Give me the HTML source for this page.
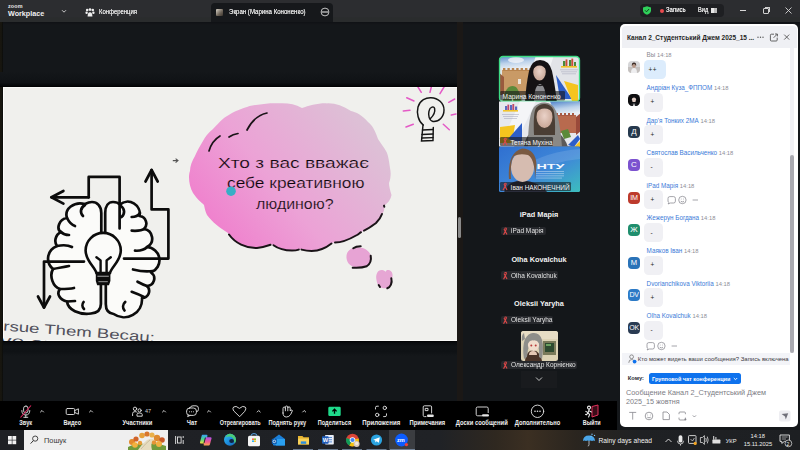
<!DOCTYPE html>
<html><head><meta charset="utf-8">
<style>
*{margin:0;padding:0;box-sizing:border-box}
html,body{width:800px;height:450px;overflow:hidden;background:#141619;font-family:"Liberation Sans",sans-serif}
.a{position:absolute}
.t{position:absolute;white-space:nowrap;line-height:1}
#top{left:0;top:0;width:800px;height:22px;background:linear-gradient(180deg,#2c2d30 0,#2c2d30 78%,#2a2c2d 80%,#2a2c2d 100%)}
#main{left:0;top:22px;width:800px;height:408px;background:#14171a}
#slide{left:3px;top:87px;width:454px;height:254px;background:#f0f0ed;overflow:hidden}
#strip{left:457px;top:22px;width:6px;height:379px;background:#1b1816}
#lstrip{left:0;top:22px;width:3px;height:379px;background:linear-gradient(90deg,#19160f 0,#15150f 60%,#0a0a0a 100%)}
#tb{left:0;top:401px;width:617px;height:29px;background:#000}
#task{left:0;top:430px;width:800px;height:20px;background:linear-gradient(90deg,#1e2024 0%,#202226 55%,#2f2820 62%,#3b2f22 66%,#2a251f 72%,#1f2124 80%,#1d1f22 100%)}
#chat{left:620px;top:24px;width:178px;height:403px;background:#fff;border-radius:5px;overflow:hidden}
.lb{top:420.5px;font-size:5.8px;font-weight:700;color:#ececec;transform:translateX(-50%)}
.nm{left:646.6px;font-size:6.3px}.tm{color:#8e8e96;font-size:5.8px}.av{left:628px;width:12px;height:12px;border-radius:4px;overflow:hidden}.avl{position:absolute;left:0;top:0;width:12px;height:12px;line-height:12px;text-align:center;color:#fff}.bub{left:643.6px;width:19.4px;height:19px;border-radius:4.5px;background:#f0f0f4}.bt{font-size:6.4px;color:#1f1f24}
.pn{left:539px;transform:translateX(-50%);font-size:7.3px;font-weight:700;color:#f2f2f2}.chip{left:500.5px;height:8.5px;background:#26282c;border-radius:2px}.ct{left:511px;font-size:6.8px;color:#e2e2e2;transform:scaleX(0.96);transform-origin:0 0}
</style></head><body>
<div id="top" class="a"></div>
<div id="main" class="a"></div>
<div class="a" style="left:0;top:22px;width:800px;height:3px;background:linear-gradient(180deg,#0f1115,#15171a)"></div>
<div id="lstrip" class="a"></div>
<div id="strip" class="a"></div>
<div class="a" style="left:0;top:72px;width:457px;height:15px;background:linear-gradient(180deg,#14171a 0%,#0f1215 70%,#050709 92%,#000 100%)"></div>
<div class="a" style="left:3px;top:341px;width:454px;height:15px;background:linear-gradient(180deg,#000 0,#080a0d 8%,#101316 35%,#0f1215 70%,#14171a 100%)"></div>
<div id="slide" class="a"></div>
<div class="a" style="left:3px;top:87px;width:454px;height:254px;border-left:1.5px solid #fcfcfb;border-top:1px solid #fafaf8;border-bottom:1px solid #fafaf8;z-index:0"></div>
<div class="a" style="left:458px;top:217px;width:3px;height:21px;background:#8a8a8a;border-radius:1.5px"></div>
<!-- SLIDE -->
<svg class="a" style="left:0;top:0" width="460" height="345" viewBox="0 0 460 345">
<defs>
<clipPath id="sc"><rect x="3" y="87" width="454" height="254"/></clipPath>
<linearGradient id="pk" x1="0" y1="0.75" x2="1" y2="0.15"><stop offset="0" stop-color="#f07ccc"/><stop offset="0.4" stop-color="#eca2d6"/><stop offset="1" stop-color="#dac6d6"/></linearGradient>
<linearGradient id="pku" gradientUnits="userSpaceOnUse" x1="188" y1="206.7" x2="392" y2="131.2"><stop offset="0" stop-color="#f07ccc"/><stop offset="0.4" stop-color="#eca2d6"/><stop offset="1" stop-color="#dac6d6"/></linearGradient>
<filter id="bl" x="-10%" y="-10%" width="120%" height="120%"><feGaussianBlur stdDeviation="0.6"/></filter>
</defs>
<g clip-path="url(#sc)">
<!-- rotated text card -->
<g transform="rotate(4.4 8 330)">
<text x="3" y="330.8" font-size="13.5" font-family="Liberation Sans" fill="#50505c" textLength="152" lengthAdjust="spacingAndGlyphs">rsue Them Becau:</text>
<text x="1" y="345" font-size="13.5" font-family="Liberation Sans" fill="#50505c" textLength="56" lengthAdjust="spacingAndGlyphs">ve on</text>
</g>
<!-- cloud -->
<g filter="url(#bl)">
<path fill="url(#pk)" d="M190 171 C188 176 189 186 193 193 C197 199 201 202 204 205 C205 210 206 213 207 215 C212 222 220 228 228 233 C234 243 246 248.5 257 248 C263 247.5 268 246 272 244.3 C277 248.5 286 250.5 292 250.5 C296 250.5 298 250 300 249.1 C306 251 316 251.5 322 249 C326 247.5 330 245 333 242.6 C340 243 350 239 357 235 C359 233.5 361 232.5 362.4 231.3 C368 229 372 226 376 223 C379 220 381 217 382 214 C384 212 385 208 384 206 C388 203 391 199 391.5 195 C390 190 389 186 389 183 C391 178 391 172 390 168 C389 160 388 155 386.6 152 C383 146 380 142 378 139 C375 130 372 125 368 122 C362 115 356 112 351 111 C343 106 335 103 327 103.4 C318 103 309 106 302 108 C295 104 288 103 280 103.3 C272 103 268 103 264 104 C258 105 252 105 247 107 C242 108 240 110 236 111 C230 114 227 116 224 118 C219 122 216 126 213 129 C208 133 205 137 203 141 C200 146 197 151 195 156 C192 161 190 166 190 171Z"/>
<path fill="#e7a3d4" d="M346.5 258 C346 251 351 247.5 357 247.5 C364 247 369 250 371 256 C372.5 263 368 267.5 360 267.8 C352 268 347 264 346.5 258Z"/>
<path fill="#e6a6d4" d="M376.5 280 C375.5 275 377 270 382 270 C384 270 385 271 385.5 272 C386 270 388 269.5 390 270.5 C393 272 393 276 392 279 C392.5 284 390 288 385 288.3 C380 288.3 377 285 376.5 280Z"/>
</g>
<g fill="none" stroke="#1a1418" stroke-width="2" stroke-linecap="round">
<path d="M209 151 C211 144 215 139 220 136" stroke-width="1.7"/>
<path d="M229 137 C232 135 235 134 238 133.5" stroke-width="1.7"/>
<path d="M247 130 C252 120 258 115 267 113" stroke-width="1.7"/>
<path d="M229 234.5 C235 243 246 248.5 257 248 C263 247.5 267 246 270.5 244.8"/><path d="M273.5 245.2 C278 248.5 286 250.5 292 250.5 C295 250.5 297 250.2 298.8 249.6"/><path d="M301.5 249.6 C307 251 316 251.5 322 249 C326 247.5 329 245.5 331.5 243.5"/>
<path d="M335 242.6 C341 242.6 350 239 357 235 C358.5 234 359.8 233 361 232.2"/><path d="M364 230.6 C369 228.5 372 226 376 223 C379 220 381 217 382 214"/>
<path d="M384 205.6 L384.3 206.8"/>
<path d="M353.3 248.3 C355 247 358 246.3 360.7 246.3"/>
<path d="M370.7 255.7 C371.5 260 370 264 366.7 266.3 C362 268 357 268 352.7 267.7"/>
<path d="M391.3 278.3 C392.5 283 390.5 287 387.3 288.3"/>
<path d="M380 287 L378.7 285"/>
</g>
<g font-family="Liberation Sans" fill="#0c060c" stroke="url(#pku)" stroke-width="0.2" style="font-weight:400">
<text x="218" y="168" font-size="14" textLength="151" lengthAdjust="spacingAndGlyphs">Хто з вас вважає</text>
<text x="227" y="188.3" font-size="14" textLength="137.5" lengthAdjust="spacingAndGlyphs">себе креативною</text>
<text x="256" y="209.2" font-size="14" textLength="77.5" lengthAdjust="spacingAndGlyphs">людиною?</text>
</g>
<circle cx="231" cy="191.2" r="4.8" fill="#38aec6"/>
<!-- small arrow -->
<path d="M172.8 160.6 H177.6 M175.6 158.6 L178 160.6 L175.6 162.6" fill="none" stroke="#555" stroke-width="1.1"/>
<!-- lightbulb sketch -->
<g fill="none" stroke="#e45ac6" stroke-width="1.5" stroke-linecap="round">
<path d="M418 87 L421.3 92.3"/><path d="M431.3 87 L430 92.3"/><path d="M444 87 L440 93.7"/><path d="M406.7 97.7 L414 101"/><path d="M448.7 102.3 L454.7 99"/><path d="M403.3 111 L410 110.3"/><path d="M451.3 115 L456 114"/><path d="M406 127 L413.3 124.3"/><path d="M443.3 124.3 L449.3 129.7"/>
</g>
<g fill="none" stroke="#151515" stroke-width="1.45" stroke-linecap="round">
<path d="M423.3 125 C418 121 416.5 113 418 107 C420 100 426 97.5 431 97.7 C438 98 444 103 444 110 C444 117 439 122 433 121.5 C429 120.5 428 115 429 111 C430 106.5 434 106 434.6 108.5 C435.4 112 433 116 430.5 118.5"/>
<path d="M423 125 L421.5 141 L433 140.5 L433.3 127.5"/>
<path d="M422.5 130 L433 129.5 M422 134.5 L433 134 M421.8 138 L433 137.6"/>
</g>
<!-- brain -->
<g fill="#fbfbf9" stroke="#0c0c0c" stroke-width="2.7" stroke-linecap="round" stroke-linejoin="round">
<path d="M101.3 234 V213 C101.3 206 97 202 92 202 C89 202 87 203 85 204 C74 201 64 209 67 218 C59 219 56 229 61 232 C55 235 54 242 57 246 C47 250 45 262 53 269 C49 276 53 287 60 289 C56 294 60 300 67 301.5 C68 310 79 315 91 313.5 C97 313 100.9 310 100.9 304 V284"/>
<path d="M105.2 234 V213 C105.2 206 108.5 202 113 202 C116 202 118.5 203 120 204.5 A12 12 0 0 1 139.5 216 A7.6 7.6 0 0 1 144 229 A9.6 9.6 0 0 1 147 247 A13.2 13.2 0 0 1 151 272.5 A7.4 7.4 0 0 1 147 286 A7 7 0 0 1 142 298 A18 18 0 0 1 113.7 314 C109 313.5 105.8 310 105.8 304 V284"/>
</g>
<g fill="none" stroke="#0c0c0c" stroke-width="2.7" stroke-linecap="round" stroke-linejoin="round">
<path d="M85 205 C80 208 80 213 83 216"/><path d="M67 218 C69 222 72 225 75 226"/><path d="M61 232 C63 234 66 235 69 235"/><path d="M57 246 C62 245 68 245 72 247"/><path d="M53 269 C58 268 64 267 69 266"/><path d="M60 289 C65 289 70 289 74 288"/><path d="M67 301.5 L75 301"/><path d="M83.6 302 C82 304 82 307 84 309"/>
<path d="M121 206 C125 209 125 214 121.5 217"/><path d="M140 213 C138 216 135 217 131.7 217"/><path d="M145 228.7 C142 230.5 136 231 131.7 230.7"/><path d="M147 247.3 C144 250 139 251 135 250.7"/><path d="M152.7 271 C147 272 139 271 133 269.5"/><path d="M146.9 286 C144 285 140 283 137.5 281.7"/><path d="M144 297 C140 295 135 293 131.7 291.8"/><path d="M125.2 302 C122.5 304.5 122.5 308 124.5 310.5"/>
<!-- arrows -->
<path d="M88.7 197.3 V176.9 H119.6 V228.4"/><path d="M88.7 197.3 H51.5"/><path d="M63.4 191 L51.5 197.3 L63.4 203.6"/>
<path d="M151.6 170 V209.4 H168.4 V258.6 H124"/><path d="M145.5 181.5 L151.6 170 L157.7 181.5"/>
<path d="M84 261.6 H44 V307.5"/><path d="M38 296.5 L44 307.5 L50 296.5"/>
</g>
<!-- bulb -->
<path d="M96.4 273 C95 267 85.6 261 85.6 250.5 A17.6 17.6 0 1 1 120.8 250.5 C120.8 261 111.4 267 110 273 Z" fill="#fbfbf9" stroke="#0c0c0c" stroke-width="2.6"/>
<g fill="none" stroke="#0c0c0c" stroke-width="2.4" stroke-linecap="round" stroke-linejoin="round">
<path d="M96.4 257.2 L100.6 260.4 V273"/><path d="M110.8 257.2 L106.6 260.4 V273"/>
</g>
<path d="M95.8 272.2 H110.4 V281 L109 285.2 H97.2 L95.8 281Z" fill="#0c0c0c"/>
<rect x="97.4" y="275.7" width="11.4" height="1.1" fill="#9a9a9a"/>
<rect x="98.4" y="281.1" width="9.4" height="1.1" fill="#8a8a8a"/>
</g>
</svg>

<div id="tb" class="a"></div>
<div id="task" class="a"></div>
<div id="chat" class="a"></div>
<!-- TOPBAR -->
<div class="t" style="left:8px;top:4.2px;font-size:5.4px;font-weight:700;color:#e8e8e8;letter-spacing:0.15px">zoom</div>
<div class="t" style="left:8px;top:10.2px;font-size:7.2px;font-weight:700;color:#f0f0f0">Workplace</div>
<svg class="a" style="left:61px;top:9px" width="6" height="5" viewBox="0 0 6 5"><path d="M1 1.2 L3 3.2 L5 1.2" fill="none" stroke="#c8c8c8" stroke-width="1"/></svg>
<svg class="a" style="left:85px;top:8px" width="10" height="9" viewBox="0 0 10 9"><circle cx="2.2" cy="2" r="1.3" fill="#eee"/><circle cx="5" cy="1.6" r="1.3" fill="#eee"/><circle cx="7.8" cy="2" r="1.3" fill="#eee"/><circle cx="1.6" cy="4.8" r="1.2" fill="#eee"/><circle cx="8.4" cy="4.8" r="1.2" fill="#eee"/><path d="M2.6 8.5 Q2.6 4.2 5 4.2 Q7.4 4.2 7.4 8.5Z" fill="#eee"/></svg>
<div class="t" style="left:98.7px;top:8.6px;font-size:6.9px;color:#e4e4e4;transform:scaleX(0.86);transform-origin:0 0;text-shadow:0 0 0.3px #e4e4e4">Конференция</div>
<div class="a" style="left:211px;top:3px;width:121.5px;height:19px;background:#16181b;border-radius:4px 4px 0 0"></div>
<div class="a" style="left:216px;top:8.5px;width:6.5px;height:7.5px;border-radius:1px;background:linear-gradient(135deg,#d9d3c8,#6b6257 60%,#3a332c)"></div>
<div class="t" style="left:228.6px;top:8.2px;font-size:7px;color:#e4e4e4;transform:scaleX(0.87);transform-origin:0 0;text-shadow:0 0 0.3px #e4e4e4">Экран (Марина Кононенко)</div>
<svg class="a" style="left:320px;top:6.9px" width="10" height="10" viewBox="0 0 10 10"><circle cx="5" cy="5" r="3.9" fill="none" stroke="#d4d4d4" stroke-width="0.9"/><path d="M1.8 5H8.2" stroke="#d4d4d4" stroke-width="1.2"/></svg>
<div class="a" style="left:640px;top:4px;width:84px;height:13px;background:#1e1f22;border-radius:4px"></div>
<svg class="a" style="left:642px;top:6px" width="10" height="9" viewBox="0 0 10 9"><path d="M5 0.3 L9 1.6 V4.3 Q9 7.3 5 8.8 Q1 7.3 1 4.3 V1.6Z" fill="#2fd05a"/><path d="M3 4.3 L4.5 5.8 L7.1 3" fill="none" stroke="#143d1f" stroke-width="1"/></svg>
<div class="a" style="left:660px;top:8.6px;width:4.2px;height:4.2px;border-radius:50%;background:#ea4b4f"></div>
<div class="t" style="left:665.8px;top:7px;font-size:6.9px;color:#eeeeee;transform:scaleX(0.87);transform-origin:0 0;text-shadow:0 0 0.3px #eee">Запись</div>
<div class="t" style="left:697.6px;top:7px;font-size:6.9px;color:#e8e8e8;transform:scaleX(0.82);transform-origin:0 0;text-shadow:0 0 0.3px #eee">Вид</div>
<div class="a" style="left:711px;top:7.5px;width:6px;height:5.4px;background:linear-gradient(90deg,#e8e8e8 0 48%,#555 48% 58%,#bbb 58%)"></div>
<div class="a" style="left:740px;top:9.5px;width:6px;height:1px;background:#d8d8d8"></div>
<div class="a" style="left:763px;top:8px;width:6px;height:5.5px;border:1px solid #d0d0d0;border-radius:1px"></div>
<div class="a" style="left:764.5px;top:7px;width:5px;height:5px;border-top:1px solid #d0d0d0;border-right:1px solid #d0d0d0;border-radius:0 1px 0 0"></div>
<svg class="a" style="left:785px;top:7px" width="7" height="7" viewBox="0 0 7 7"><path d="M0.5 0.5L6.5 6.5M6.5 0.5L0.5 6.5" stroke="#d8d8d8" stroke-width="0.9"/></svg>

<!-- TOOLBAR -->
<svg class="a" style="left:0;top:400px" width="617" height="30" viewBox="0 0 617 30"><g font-family="Liberation Sans" font-weight="700" fill="#eeeeee" font-size="6.5">
<text x="19.3" y="25.2" textLength="12.9" lengthAdjust="spacingAndGlyphs">Звук</text>
<text x="63.5" y="25.2" textLength="17.7" lengthAdjust="spacingAndGlyphs">Видео</text>
<text x="122.5" y="25.2" textLength="29.7" lengthAdjust="spacingAndGlyphs">Участники</text>
<text x="186.8" y="25.2" textLength="10.4" lengthAdjust="spacingAndGlyphs">Чат</text>
<text x="219.8" y="25.2" textLength="40.9" lengthAdjust="spacingAndGlyphs">Отреагировать</text>
<text x="268.5" y="25.2" textLength="37.7" lengthAdjust="spacingAndGlyphs">Поднять руку</text>
<text x="317.8" y="25.2" textLength="33.4" lengthAdjust="spacingAndGlyphs">Поделиться</text>
<text x="362.3" y="25.2" textLength="37.9" lengthAdjust="spacingAndGlyphs">Приложения</text>
<text x="409.5" y="25.2" textLength="35.7" lengthAdjust="spacingAndGlyphs">Примечания</text>
<text x="455.8" y="25.2" textLength="52.0" lengthAdjust="spacingAndGlyphs">Доски сообщений</text>
<text x="514.8" y="25.2" textLength="45.4" lengthAdjust="spacingAndGlyphs">Дополнительно</text>
<text x="582.8" y="25.2" textLength="17.9" lengthAdjust="spacingAndGlyphs">Выйти</text>
</g></svg>
<svg class="a" style="left:0;top:400px" width="617" height="29" viewBox="0 0 617 29">
<g fill="none" stroke="#e6e6e6" stroke-width="0.9" stroke-linecap="round" stroke-linejoin="round">
<!-- carets -->
<path d="M40.5 12 L42 10.5 L43.5 12"/><path d="M89.5 12 L91 10.5 L92.5 12"/><path d="M162.5 12 L164 10.5 L165.5 12"/><path d="M207.5 12 L209 10.5 L210.5 12"/><path d="M257.2 12 L258.7 10.5 L260.2 12"/><path d="M302.7 12 L304.2 10.5 L305.7 12"/>
<!-- mic -->
<rect x="23.6" y="6" width="4.4" height="7" rx="2.2"/><path d="M21.8 10.5 Q21.8 15 25.8 15 Q29.8 15 29.8 10.5"/><path d="M25.8 15 V17.3 M23.8 17.3 H27.8"/>
<!-- video -->
<rect x="66.2" y="8.5" width="8.5" height="6" rx="1.2"/><path d="M74.7 10.6 L78.4 8.8 V14.2 L74.7 12.4"/>
<!-- participants -->
<circle cx="135" cy="8.8" r="1.7"/><path d="M132.6 15.6 V13.6 Q132.6 11.6 135 11.6 Q136.6 11.6 137.2 12.4"/><circle cx="139.6" cy="10.4" r="1.6"/><path d="M137 15.8 V14.4 Q137 13 139.6 13 Q142.2 13 142.2 14.4 V15.8Z"/>
<!-- chat -->
<path d="M190 7.6 Q190.6 5.8 193 5.8 H196 Q198.4 5.8 198.4 8.2 V9.6 Q198.4 11.6 196.6 11.8"/><path d="M189.6 8 H193.4 Q196.4 8 196.4 11 V12.4 Q196.4 15.4 193.4 15.4 H189.6 Q186.6 15.4 186.6 12.4 V11 Q186.6 8 189.6 8Z" fill="#000"/><path d="M188.4 15 L187.6 16.6 L190.2 15.4"/>
<!-- heart -->
<path d="M239.4 16.4 L233.8 11 Q232 8.6 233.6 7 Q235.8 5.2 239.4 8.4 Q243 5.2 245.2 7 Q246.8 8.6 245 11Z"/>
<!-- hand -->
<path d="M283 13 V8.5 Q283 7 284.2 7 Q285.4 7 285.4 8.5 V7.2 Q285.4 6 286.6 6 Q287.8 6 287.8 7.2 V8 Q287.8 6.8 289 6.8 Q290.2 6.8 290.2 8 V11 L291 10 Q292.2 9.6 292.4 10.8 L290.6 14.6 Q289 17 286.4 17 Q283 17 283 13Z"/>
<path d="M285.4 8.5 V10.8 M287.8 8 V10.8"/>
<!-- apps -->
<path d="M375.5 9 V7.6 Q375.5 6.2 377 6.2 H378.4"/><path d="M386.5 13.8 V15.2 Q386.5 16.6 385 16.6 H383.6"/><circle cx="384.8" cy="7.9" r="1.7"/><circle cx="377.2" cy="14.9" r="1.7"/>
<!-- notes -->
<path d="M431.6 13 V7 Q431.6 5.8 430.4 5.8 H424.4 Q423.2 5.8 423.2 7 V15.4 Q423.2 16.6 424.4 16.6 H426"/><path d="M425.6 8.4 H428 V10.6 H425.6Z"/>
<!-- whiteboard -->
<path d="M482 15.8 H477.6 Q476.2 15.8 476.2 14.4 V8.4 Q476.2 7 477.6 7 H486.8 Q488.2 7 488.2 8.4 V12.6"/>
<!-- more -->
<circle cx="537.5" cy="11.3" r="6.2"/>
</g>
<g fill="#e6e6e6">
<rect x="427" y="14.6" width="6.8" height="2.4" rx="1.1"/>
<rect x="482" y="14.2" width="7" height="2.4" rx="1.1"/>
<circle cx="189.6" cy="11.7" r="0.55"/><circle cx="191.5" cy="11.7" r="0.55"/><circle cx="193.4" cy="11.7" r="0.55"/><circle cx="535" cy="11.3" r="0.8"/><circle cx="537.5" cy="11.3" r="0.8"/><circle cx="540" cy="11.3" r="0.8"/>
<text x="145" y="12.5" font-size="5.5" font-family="Liberation Sans" fill="#cfcfcf">47</text>
</g>
<path d="M20.5 17.5 L31 5.5" stroke="#e0245e" stroke-width="1.1"/>
<rect x="328.3" y="6.7" width="12.4" height="9.3" rx="1.2" fill="#1ed98a"/>
<path d="M334.5 13.8 V9.8 M332.4 11.4 L334.5 9.2 L336.6 11.4" fill="none" stroke="#000" stroke-width="1.3"/>
<!-- exit -->
<path d="M592 6.5 L598 5 V15 L592 17Z" fill="#3a0c18" stroke="#e0305a" stroke-width="1"/>
<g fill="none" stroke="#f0f0f0" stroke-width="1.05" stroke-linecap="round" stroke-linejoin="round"><circle cx="589" cy="7.6" r="1.5"/><path d="M589.2 9.4 L588 12.6 L585.8 11.4 M588.8 10.6 L591.4 12 M588 12.6 L589.6 14.6 L588.6 17 M588 12.6 L586.6 14.8 L585.6 14.4"/></g>
</svg>

<!-- TASKBAR -->
<svg class="a" style="left:0;top:430px" width="800" height="20" viewBox="0 0 800 20">
<g fill="#f2f2f2"><rect x="8" y="6" width="3.8" height="3.8"/><rect x="12.4" y="6" width="3.8" height="3.8"/><rect x="8" y="10.4" width="3.8" height="3.8"/><rect x="12.4" y="10.4" width="3.8" height="3.8"/></g>
<rect x="24" y="0" width="144" height="20" fill="#efefef"/>
<circle cx="35.2" cy="8.6" r="2.6" fill="none" stroke="#333" stroke-width="0.9"/><path d="M33.4 10.6 L30.6 13.6" stroke="#333" stroke-width="1"/>
<text x="44" y="13" font-size="7.4" font-family="Liberation Sans" fill="#3a3a3a">Пошук</text>
<!-- autumn pic -->
<path d="M128 17 Q136 13 146 14 Q156 12 166 16 V20 H128Z" fill="#6f9a3c"/>
<path d="M138 20 Q142 14 147 10 Q151 8 154 9 Q150 13 152 20Z" fill="#e6dcc0"/>
<path d="M141 19 Q146 13 150 10" fill="none" stroke="#b8a888" stroke-width="0.6"/>
<circle cx="132" cy="12" r="3" fill="#e38a2c"/><circle cx="136" cy="9" r="2.6" fill="#d0642a"/><circle cx="135" cy="15" r="2.8" fill="#f2b23e"/><circle cx="140" cy="13" r="2.2" fill="#e89a34"/>
<circle cx="142" cy="5.5" r="2.8" fill="#e6a03a"/><circle cx="147" cy="4" r="2.6" fill="#d8762c"/><circle cx="152" cy="5" r="2.6" fill="#eab048"/>
<circle cx="157" cy="8" r="3.2" fill="#de8a2e"/><circle cx="162" cy="10" r="2.8" fill="#c85a28"/><circle cx="159" cy="14" r="3" fill="#f0b040"/><circle cx="154" cy="12.5" r="2.2" fill="#e49434"/>
<!-- task view -->
<g fill="none" stroke="#e6e6e6" stroke-width="0.9"><rect x="177.5" y="7" width="3.6" height="6"/><path d="M175.6 6 V14 M183.2 6 V8 M183.2 10 V14"/></g>
<!-- copilot -->
<defs>
<linearGradient id="cop" x1="0" y1="0" x2="1" y2="1"><stop offset="0" stop-color="#3ec6f0"/><stop offset="0.35" stop-color="#62d86a"/><stop offset="0.6" stop-color="#f2b23a"/><stop offset="0.8" stop-color="#e8508a"/><stop offset="1" stop-color="#8a5ae0"/></linearGradient>
<linearGradient id="edg" x1="0" y1="0" x2="1" y2="1"><stop offset="0" stop-color="#35c1f1"/><stop offset="0.5" stop-color="#1d8fe0"/><stop offset="1" stop-color="#1464b8"/></linearGradient>
</defs>
<defs><linearGradient id="cpl" x1="0" y1="0" x2="0" y2="1"><stop offset="0" stop-color="#3aa0f4"/><stop offset="0.5" stop-color="#48d48e"/><stop offset="1" stop-color="#f0e040"/></linearGradient>
<linearGradient id="cpr" x1="0" y1="0" x2="0" y2="1"><stop offset="0" stop-color="#b050e8"/><stop offset="0.55" stop-color="#f05a90"/><stop offset="1" stop-color="#fca850"/></linearGradient></defs>
<path d="M202.6 4.8 H206.6 Q207.7 4.8 207.4 5.9 L205.7 12.4 Q205.4 13.4 204.4 13.4 H200.9 Q199.7 13.4 200 12.2 L201.6 5.9 Q201.9 4.8 202.6 4.8Z" fill="url(#cpl)"/>
<path d="M206.7 7.2 H210.5 Q211.8 7.2 211.5 8.4 L209.9 14.6 Q209.6 15.6 208.6 15.6 H204.6 Q203.4 15.6 203.7 14.4 L205.3 8.2 Q205.6 7.2 206.7 7.2Z" fill="url(#cpr)"/>
<path d="M205.4 7.6 L204 13" stroke="#141418" stroke-width="0.9"/>
<circle cx="230" cy="9.8" r="6" fill="url(#edg)"/>
<path d="M230 3.8 A6 6 0 0 1 236 9.8 Q236 12.6 234.6 13.6 Q234 10 233.2 8.6 Q232 6.8 229 6.6 Q227 6.6 225.4 7.6 Q227 3.8 230 3.8Z" fill="#4ccc78"/>
<ellipse cx="231.6" cy="11" rx="2.4" ry="2.1" fill="#102444"/>
<!-- store -->
<path d="M251 5.8 Q251 3.6 254 3.6 Q257 3.6 257 5.8" fill="none" stroke="#58a6e8" stroke-width="1"/>
<rect x="248" y="5.8" width="12" height="10.4" rx="1.5" fill="#f4f4f4"/>
<rect x="252.2" y="8.4" width="1.6" height="1.6" fill="#f25022"/><rect x="254.2" y="8.4" width="1.6" height="1.6" fill="#7fba00"/><rect x="252.2" y="10.4" width="1.6" height="1.6" fill="#00a4ef"/><rect x="254.2" y="10.4" width="1.6" height="1.6" fill="#ffb900"/>
<!-- outlook -->
<path d="M273 9 L279 4.4 L285 9 V14.8 Q285 15.6 284.2 15.6 H273.8 Q273 15.6 273 14.8Z" fill="#1b7fd8"/>
<path d="M273 9 L285 9 V15.6 H276Z" fill="#2aa0f0"/>
<rect x="271.8" y="8.8" width="5" height="5.2" rx="0.8" fill="#0c5bb0"/><circle cx="274.3" cy="11.4" r="1.3" fill="none" stroke="#fff" stroke-width="0.7"/>
<!-- explorer -->
<path d="M298 6 H302.4 L303.6 7.2 H309 V14.4 H298Z" fill="#e8b430"/>
<rect x="298" y="8.6" width="11" height="5.8" fill="#f8d25a"/>
<rect x="300.8" y="11.4" width="5.4" height="2.4" fill="#2a8ee0"/>
<!-- word -->
<rect x="325" y="5" width="8.8" height="9.6" rx="0.8" fill="#e9eef8"/>
<rect x="327" y="7" width="5" height="1" fill="#5b8fd6"/><rect x="327" y="9.2" width="5" height="1" fill="#5b8fd6"/><rect x="327" y="11.4" width="5" height="1" fill="#5b8fd6"/>
<rect x="322" y="6.2" width="6.6" height="7.6" rx="0.8" fill="#1f5bb8"/>
<text x="322.8" y="12" font-size="5.6" font-weight="700" font-family="Liberation Sans" fill="#fff">W</text>
<!-- chrome -->
<circle cx="352.5" cy="10" r="6.3" fill="#db4437"/>
<path d="M352.5 10 L358.6 8.4 A6.3 6.3 0 0 1 349.2 15.4Z" fill="#f4c20d"/>
<path d="M352.5 10 L349.2 15.4 A6.3 6.3 0 0 1 346.4 8Z" fill="#0f9d58"/>
<circle cx="352.5" cy="10" r="2.8" fill="#fff"/><circle cx="352.5" cy="10" r="2.1" fill="#4285f4"/>
<circle cx="356.6" cy="14" r="3" fill="#d8c8b8"/><circle cx="356.6" cy="13.4" r="1.6" fill="#f2e8dc"/>
<!-- telegram -->
<circle cx="376.5" cy="10" r="5.6" fill="#2aa3e0"/>
<path d="M373.2 9.8 L379.8 7.2 L378.8 12.8 L376.6 11.2 L375.2 12.4 L375.4 10.6Z" fill="#fff"/>
<!-- zoom active -->
<rect x="389" y="0" width="26" height="20" fill="#3b3d41"/>
<circle cx="401.5" cy="10" r="6.4" fill="#0b5cff"/>
<text x="397" y="11.6" font-size="5.6" font-weight="700" font-family="Liberation Sans" fill="#fff">zm</text>
<circle cx="406.4" cy="14.6" r="1.7" fill="#e8403a"/>
<g fill="#8aa0bb" opacity="0.7"><rect x="293" y="19" width="20" height="1"/><rect x="318" y="19" width="20" height="1"/><rect x="342" y="19" width="20" height="1"/><rect x="366.5" y="19" width="20" height="1"/><rect x="390" y="19" width="25" height="1"/></g>
<!-- weather -->
<path d="M583 11 Q583 5.4 589 5.4 Q595 5.4 595 11 Q593.5 9.8 592 11 Q590.5 9.8 589 11 Q587.5 9.8 586 11 Q584.5 9.8 583 11Z" fill="#4ba6e8"/>
<path d="M589 11 V14.8 Q589 16 587.8 16" fill="none" stroke="#cfd8e0" stroke-width="0.8"/>
<g fill="#7fc4f4"><circle cx="592" cy="4.2" r="0.7"/><circle cx="594.5" cy="5.4" r="0.7"/><circle cx="591" cy="6.4" r="0.6"/></g>
<text x="598.5" y="13" font-size="6.7" font-family="Liberation Sans" fill="#f0f0f0">Rainy days ahead</text>
<g fill="none" stroke="#e8e8e8" stroke-width="0.9"><path d="M665.5 12 L668.5 9 L671.5 12"/></g>
<rect x="678.6" y="5.2" width="3.8" height="7.4" rx="1.9" fill="#e8e8e8"/><path d="M677.5 10.8 Q677.5 14 680.5 14 Q683.5 14 683.5 10.8 M680.5 14 V15.6" fill="none" stroke="#e8e8e8" stroke-width="0.8"/>
<rect x="688.5" y="5.6" width="7.5" height="7.8" rx="0.8" fill="none" stroke="#e0e0e0" stroke-width="0.9"/>
<path d="M690.5 9 L692.5 11 L694.4 8" fill="none" stroke="#e0e0e0" stroke-width="0.7"/>
<circle cx="695.2" cy="13.4" r="1.6" fill="#f5a623"/>
<g fill="none" stroke="#e0e0e0" stroke-width="0.8"><path d="M700.4 7.5 H702.4 L704.4 5.6 V14.4 L702.4 12.5 H700.4Z"/><path d="M705.8 8 Q706.8 10 705.8 12"/><path d="M707.3 6.6 Q709 10 707.3 13.4"/></g>
<g fill="#e0e0e0"><rect x="712.4" y="9.6" width="8" height="4" rx="0.6"/><rect x="713.2" y="6" width="1" height="3.6"/><rect x="715.4" y="7" width="1" height="2.6"/></g>
<text x="725.7" y="12.6" font-size="5.8" font-family="Liberation Sans" fill="#ececec">УКР</text>
<text x="750.5" y="8" font-size="5.8" font-family="Liberation Sans" fill="#ececec">14:18</text>
<text x="743.7" y="16.4" font-size="5.8" font-family="Liberation Sans" fill="#ececec">15.11.2025</text>
<path d="M780 5 H789.4 V11.4 H784.4 L781.8 13.4 V11.4 H780Z" fill="none" stroke="#e6e6e6" stroke-width="0.9"/>
<g stroke="#e6e6e6" stroke-width="0.6"><path d="M781.8 7 H787.6 M781.8 9 H786"/></g>
<circle cx="788.4" cy="13.4" r="3.4" fill="#1e1f22" stroke="#e6e6e6" stroke-width="0.7"/>
<text x="786.6" y="15.6" font-size="5" font-family="Liberation Sans" fill="#f0f0f0">2</text>
</svg>

<!-- TILES -->
<svg class="a" style="left:498px;top:55px" width="83" height="138" viewBox="0 0 83 138">
<defs>
<clipPath id="c1"><rect x="1.5" y="1.5" width="80" height="45" rx="3.5"/></clipPath>
<clipPath id="c2"><rect x="1" y="46.5" width="81" height="45"/></clipPath>
<clipPath id="c3"><rect x="1" y="91.5" width="81" height="45.5" rx="1.5"/></clipPath>
<linearGradient id="sky" x1="0" y1="0" x2="0.3" y2="1"><stop offset="0" stop-color="#4a7fc8"/><stop offset="0.6" stop-color="#bcd2ea"/><stop offset="1" stop-color="#e8eef4"/></linearGradient>
<linearGradient id="blu" x1="0" y1="0" x2="1" y2="1"><stop offset="0" stop-color="#2f6fd0"/><stop offset="0.55" stop-color="#3f88d8"/><stop offset="1" stop-color="#3cc0bc"/></linearGradient>
<radialGradient id="fc" cx="0.5" cy="0.45" r="0.55"><stop offset="0" stop-color="#ead2c8"/><stop offset="1" stop-color="#c9a898"/></radialGradient>
</defs>
<!-- tile 1 -->
<g clip-path="url(#c1)">
<rect x="0" y="0" width="83" height="48" fill="#e2e4e8"/>
<path d="M0 0 H40 L33 14 H0Z" fill="url(#sky)"/>
<ellipse cx="18" cy="5" rx="8" ry="3" fill="#f2f4f8" opacity="0.8"/>
<path d="M38 0 L56 0 L40 48 L24 48Z" fill="#f5f6f8" opacity="0.9"/>
<path d="M4 15 H33 V40 H4Z" fill="#c99a66"/>
<path d="M5 13 h2.4v2h2v-2h2.4v2h2v-2h2.4v2h2v-2h2.4v2h2v-2h2.4v2h2v-2h2.4v2h2v-2h2.4v3H5Z" fill="#b8844e"/>
<path d="M0 17 L6 22 V40 H0Z" fill="#9a5a3e"/>
<rect x="20" y="24" width="3" height="5" fill="#ece4d8"/>
<path d="M6 40 Q10 28 18 32 Q22 36 24 48 H4Z" fill="#5c8a3a"/>
<path d="M58 20 L74 44 H62Z" fill="#2d5ec8"/>
<path d="M66 26 L80 30 V46 L74 46Z" fill="#f4c41e"/>
<g fill="#4a8a3a"><rect x="65" y="6" width="2.4" height="5"/><rect x="71" y="5" width="2.4" height="6"/><rect x="76" y="7" width="2" height="4"/></g>
<g fill="#d04a3a"><rect x="67.6" y="4.4" width="1.8" height="6.6"/><rect x="73.4" y="3.6" width="1.8" height="7.4"/></g>
<rect x="63" y="11" width="16" height="1.6" fill="#f2c42a"/>
<g fill="#8a8ca8" opacity="0.55"><rect x="62" y="14.5" width="18" height="0.7"/><rect x="63" y="16.5" width="16" height="0.7"/><rect x="64" y="18.5" width="14" height="0.7"/></g>
<path d="M27 48 Q28 30 31 16 Q34 5 42 5 Q51 5 54 16 Q57 30 59 48Z" fill="#151214"/>
<ellipse cx="41.5" cy="17" rx="6.3" ry="8.6" fill="url(#fc)"/>
<path d="M35 15 Q35.5 8 41.5 8 Q47.5 8 48 15 Q46 10.5 41.5 10.5 Q37 10.5 35 15Z" fill="#151214"/>
<path d="M36 48 Q36 30 42 29 Q48 30 48 48Z" fill="#8e8e92"/>
<path d="M37.5 29.5 Q42 32 46.5 29.5" fill="none" stroke="#151214" stroke-width="1"/>
<rect x="2" y="36" width="65" height="9.5" rx="1.2" fill="#161618" opacity="0.6"/>
</g>
<rect x="1.5" y="1.5" width="80" height="45" rx="3.5" fill="none" stroke="#3ddc84" stroke-width="1.3"/>
<text x="4.6" y="44" font-size="7.2" font-family="Liberation Sans" fill="#f4f4f4" textLength="58" lengthAdjust="spacingAndGlyphs">Марина Кононенко</text>
<!-- tile 2 -->
<g clip-path="url(#c2)">
<rect x="0" y="46" width="83" height="46" fill="#e6e8ec"/>
<path d="M52 46 H83 V60 L56 58Z" fill="url(#sky)"/>
<path d="M22 46 L38 46 L16 92 L2 92Z" fill="#f6f7f9" opacity="0.85"/>
<g fill="#5a6ac0"><rect x="7" y="51" width="2.2" height="4"/><rect x="12" y="50" width="2.2" height="5"/><rect x="17" y="51.5" width="2.2" height="3.5"/></g>
<g fill="#c04a6a"><rect x="9.4" y="49.6" width="1.8" height="5.4"/><rect x="14.4" y="49" width="1.8" height="6"/></g>
<rect x="5" y="55" width="15" height="1.6" fill="#f2c42a"/>
<g fill="#8a8ca8" opacity="0.55"><rect x="4" y="59" width="17" height="0.7"/><rect x="5" y="61" width="15" height="0.7"/><rect x="6" y="63" width="13" height="0.7"/></g>
<path d="M2 72 L17 70 L14 88 H2Z" fill="#f4c41e"/>
<path d="M10 84 L24 68 V88 Z" fill="#2d5ec8"/>
<path d="M57 60 H78 V78 H57Z" fill="#b86a4e"/>
<path d="M58 58 h2v2h2v-2h2v2h2v-2h2v2h2v-2h2v2h2v-2h2v3H58Z" fill="#a85a44"/>
<path d="M78 62 L83 58 V76 L78 80Z" fill="#9a4a3a"/>
<path d="M63 76 L70 74 L73 82 L66 84Z" fill="#5c8a3a"/>
<path d="M70 90 L80 80 L82 84 L76 92Z" fill="#2d5ec8"/>
<path d="M76 92 L82 86 V92Z" fill="#f4c41e"/>
<path d="M26 92 Q28 74 46 73 Q64 74 70 92Z" fill="#5c5a58"/>
<path d="M30 92 Q30 60 36 52 Q41 47 47 47.5 Q55 48 58 56 Q62 66 64 92Z" fill="#8a8986"/><path d="M36 80 Q35 58 38 53 Q42 48.5 47 49 Q53 49.5 55.5 55 Q57.5 62 57 80Z" fill="#4a3e34"/>
<ellipse cx="46.5" cy="62" rx="8" ry="11" fill="url(#fc)"/>
<path d="M38 58 Q39 50.5 46.5 50.5 Q54 50.5 55 58 Q52 53.5 46.5 53.5 Q41 53.5 38 58Z" fill="#4a3e34"/>
<rect x="2" y="82" width="53" height="9" rx="1.2" fill="#161618" opacity="0.6"/>
</g>
<!-- tile 3 -->
<g clip-path="url(#c3)">
<rect x="0" y="91" width="83" height="47" fill="url(#blu)"/>
<path d="M24 112 Q50 96 83 94 V104 Q56 106 30 120Z" fill="#fff" opacity="0.12"/>
<text x="38.5" y="113.5" font-size="8" font-weight="700" font-family="Liberation Sans" fill="#f2f8ff" textLength="28" lengthAdjust="spacingAndGlyphs">НТУ</text>
<g fill="#e2ecf8" opacity="0.5"><rect x="38" y="116" width="28" height="0.9"/><rect x="38" y="118.2" width="28" height="0.9"/><rect x="38" y="120.4" width="28" height="0.9"/><rect x="38" y="122.6" width="26" height="0.9"/></g>
<path d="M6 138 Q8 127 24 125 Q42 127 50 138Z" fill="#2a2c3a"/>
<ellipse cx="24.5" cy="112" rx="11.5" ry="15" fill="#d6bcb0"/>
<path d="M11 124 Q9 98 24 93.5 Q38 94 38.5 110 L37 124 Q37 104 30 100 Q22 98 16 101 Q12 106 13 124Z" fill="#7a5a42"/>
<rect x="2" y="127" width="71" height="9" rx="1.2" fill="#161618" opacity="0.6"/>
</g>
<g><path d="M6 84 L9 90 M8.4 83.8 L5 90.2 M6.2 83.6 Q7.4 82.8 8.6 83.6" stroke="#e04848" stroke-width="1.1" fill="none"/></g>
<text x="12.6" y="89.6" font-size="7.2" font-family="Liberation Sans" fill="#f4f4f4" textLength="42" lengthAdjust="spacingAndGlyphs">Тетяна Мухіна</text>
<g><path d="M6 129 L9 135 M8.4 128.8 L5 135.2 M6.2 128.6 Q7.4 127.8 8.6 128.6" stroke="#e04848" stroke-width="1.1" fill="none"/></g>
<text x="12.6" y="134.6" font-size="7.2" font-family="Liberation Sans" fill="#f4f4f4" textLength="59" lengthAdjust="spacingAndGlyphs">Іван НАКОНЕЧНИЙ</text>
</svg>
<!-- PARTICIPANT LIST -->
<div class="t pn" style="top:211.2px">iPad Марія</div>
<div class="a chip" style="top:226.5px;width:45.5px"></div>
<div class="t ct" style="top:227.9px">iPad Марія</div>
<div class="t pn" style="top:255.8px">Olha Kovalchuk</div>
<div class="a chip" style="top:271px;width:57px"></div>
<div class="t ct" style="top:272.5px">Olha Kovalchuk</div>
<div class="t pn" style="top:300.4px">Oleksii Yaryha</div>
<div class="a chip" style="top:315.6px;width:52px"></div>
<div class="t ct" style="top:317.1px">Oleksii Yaryha</div>
<svg class="a" style="left:521px;top:331px" width="37" height="30" viewBox="0 0 37 30">
<defs><clipPath id="ava"><rect x="0" y="0" width="37" height="30" rx="2.5"/></clipPath></defs>
<g clip-path="url(#ava)">
<rect x="0" y="0" width="37" height="30" fill="#dcd2b4"/>
<rect x="0" y="0" width="37" height="8" fill="#e6dcc4"/>
<rect x="22" y="10" width="13" height="14" fill="#7a7a5a"/><rect x="24" y="12" width="9" height="9" fill="#2e4a30"/><rect x="25" y="13" width="5" height="2" fill="#6aa060"/>
<path d="M4 30 Q5 20 12 19 Q19 20 21 30Z" fill="#4a3428"/>
<path d="M8 24 Q8 20 12 20 Q16 20 16 24 Z" fill="#e4c8b4"/>
<path d="M3 28 Q1 16 4 8 Q8 1 13 2 Q19 2 21 9 Q23 16 21 28 L18 26 Q19 12 13 9 Q7 11 6 26Z" fill="#8e8e8a"/>
<path d="M1 10 Q0 4 3 2 L4 8Z" fill="#8e8e8a"/>
<ellipse cx="12.5" cy="14" rx="5.6" ry="6" fill="#f0dccc"/>
<path d="M6.6 12.4 Q7 6.6 12.5 6.6 Q18 6.6 18.4 12.4 Q16 9 12.5 9.4 Q9 9 6.6 12.4Z" fill="#8e8e8a"/>
<circle cx="10.3" cy="14.6" r="1" fill="#b83a3a"/><circle cx="14.7" cy="14.6" r="1" fill="#b83a3a"/>
</g></svg>
<div class="a chip" style="top:360.6px;width:76px"></div>
<div class="t ct" style="top:362px">Олександр Корнієнко</div>
<div class="a" style="left:521px;top:371px;width:36px;height:17px;background:#191b1e"></div>
<svg class="a" style="left:535px;top:376px" width="8" height="6" viewBox="0 0 8 6"><path d="M1 1.5 L4 4.5 L7 1.5" fill="none" stroke="#d8d8d8" stroke-width="0.9"/></svg>
<svg class="a" style="left:500px;top:224px" width="12" height="150" viewBox="0 0 12 150">
<g stroke="#e04848" stroke-width="1.1" fill="none">
<path d="M4 5 L7 10.5 M6.6 4.6 L3.6 10.8 M4.4 4.4 Q5.6 3.6 6.8 4.4"/>
<path d="M4 49.5 L7 55 M6.6 49.1 L3.6 55.3 M4.4 48.9 Q5.6 48.1 6.8 48.9"/>
<path d="M4 94 L7 99.5 M6.6 93.6 L3.6 99.8 M4.4 93.4 Q5.6 92.6 6.8 93.4"/>
<path d="M4 139 L7 144.5 M6.6 138.6 L3.6 144.8 M4.4 138.4 Q5.6 137.6 6.8 138.4"/>
</g></svg>

<!-- CHAT -->
<div class="a" style="left:621.5px;top:25.5px;width:175px;height:22.3px;background:#eff0f4;border-radius:4px 4px 0 0"></div>
<div class="t" style="left:627px;top:35.2px;font-size:6.5px;font-weight:700;color:#1f1f24">Канал 2_Студентський Джем 2025_15 ...</div>
<svg class="a" style="left:755px;top:30px" width="40" height="14" viewBox="0 0 40 14"><g fill="#555"><circle cx="3" cy="7.3" r="0.7"/><circle cx="5.5" cy="7.3" r="0.7"/><circle cx="8" cy="7.3" r="0.7"/></g><g fill="none" stroke="#555" stroke-width="0.9"><path d="M19 4.2 H16.4 Q15.4 4.2 15.4 5.2 V10 Q15.4 11 16.4 11 H21.2 Q22.2 11 22.2 10 V7.6"/><path d="M18.6 7.8 L22.2 4.2 M20 4 H22.4 V6.4"/><path d="M29.2 4.6 L34.2 9.6 M34.2 4.6 L29.2 9.6"/></g></svg>
<div class="a" style="left:790px;top:48px;width:4px;height:305px;background:#f1f1f5"></div>
<div class="a" style="left:790px;top:155px;width:4px;height:198px;background:#a9a9b0;border-radius:2px"></div>
<div class="t nm" style="top:52.4px;color:#8a8a90">Вы <span class="tm">14:18</span></div>
<svg class="a" style="left:628px;top:61px" width="12" height="12" viewBox="0 0 12 12"><defs><clipPath id="av1"><rect width="12" height="12" rx="4"/></clipPath></defs><g clip-path="url(#av1)"><rect width="12" height="12" fill="#d6d6d8"/><rect x="0" y="6" width="12" height="6" fill="#c4c0be"/><path d="M3 12 Q3 7 6 7 Q9 7 9 12Z" fill="#eeeef0"/><ellipse cx="6" cy="4.6" rx="2" ry="2.4" fill="#b89888"/><path d="M3.8 5 Q3.6 1.6 6 1.6 Q8.4 1.6 8.2 5 Q7 2.8 6 3 Q5 2.8 3.8 5Z" fill="#3a2a24"/></g></svg>
<div class="a bub" style="top:60.0px;width:22.2px;background:#dcecfc"></div>
<div class="t bt" style="left:648.5px;top:66.6px;letter-spacing:0.6px">++</div>
<div class="t nm" style="top:85.0px;color:#3b7ad8">Андріан Куза_ФППОМ <span class="tm">14:18</span></div>
<svg class="a" style="left:628px;top:93.5px" width="12" height="12" viewBox="0 0 12 12"><defs><clipPath id="av2"><rect width="12" height="12" rx="4.5"/></clipPath></defs><g clip-path="url(#av2)"><rect width="12" height="12" fill="#0e0e10"/><path d="M2.5 12 Q3 8.4 6 8.4 Q9 8.4 9.5 12Z" fill="#1e2024"/><path d="M5 12 L6 9 L7 12Z" fill="#e8e8ea"/><ellipse cx="6" cy="5.4" rx="2.1" ry="2.7" fill="#e0ccc4"/><path d="M3.8 5 Q3.6 2 6 2 Q8.4 2 8.2 5 Q7.6 3.4 6 3.4 Q4.4 3.4 3.8 5Z" fill="#101012"/></g></svg>
<div class="a bub" style="top:92.6px"></div>
<div class="t bt" style="left:650.5px;top:99.2px">+</div>
<div class="t nm" style="top:117.6px;color:#3b7ad8">Дар'я Тонких 2МА <span class="tm">14:18</span></div>
<div class="a av" style="top:126.3px;background:#26394d"><div class="avl" style="font-size:8px">Д</div></div>
<div class="a bub" style="top:125.2px"></div>
<div class="t bt" style="left:650.5px;top:131.8px">+</div>
<div class="t nm" style="top:150.2px;color:#3b7ad8">Святослав Васильченко <span class="tm">14:18</span></div>
<div class="a av" style="top:158.9px;background:#7c52cf"><div class="avl" style="font-size:8px">С</div></div>
<div class="a bub" style="top:157.8px"></div>
<div class="t bt" style="left:650.5px;top:164.4px">-</div>
<div class="t nm" style="top:182.8px;color:#3b7ad8">iPad Марія <span class="tm">14:18</span></div>
<div class="a av" style="top:191.5px;background:#bd3a2c"><div class="avl" style="font-size:7.2px;letter-spacing:-0.2px">IM</div></div>
<div class="a bub" style="top:190.4px"></div>
<div class="t bt" style="left:650.5px;top:197.0px">+</div>
<div class="t nm" style="top:215.4px;color:#3b7ad8">Жежерун Богдана <span class="tm">14:18</span></div>
<div class="a av" style="top:224.1px;background:#1f8e6d"><div class="avl" style="font-size:8px">Ж</div></div>
<div class="a bub" style="top:223.0px"></div>
<div class="t bt" style="left:650.5px;top:229.6px">-</div>
<div class="t nm" style="top:248.0px;color:#3b7ad8">Маяков Іван <span class="tm">14:18</span></div>
<div class="a av" style="top:256.7px;background:#2a73b8"><div class="avl" style="font-size:7.6px">M</div></div>
<div class="a bub" style="top:255.6px"></div>
<div class="t bt" style="left:650.5px;top:262.2px">+</div>
<div class="t nm" style="top:280.6px;color:#3b7ad8">Dvorianchikova Viktoriia <span class="tm">14:18</span></div>
<div class="a av" style="top:289.3px;background:#2b7ac6"><div class="avl" style="font-size:7px;letter-spacing:-0.3px">DV</div></div>
<div class="a bub" style="top:288.2px"></div>
<div class="t bt" style="left:650.5px;top:294.8px">+</div>
<div class="t nm" style="top:313.2px;color:#3b7ad8">Olha Kovalchuk <span class="tm">14:18</span></div>
<div class="a av" style="top:321.9px;background:#2a3b52"><div class="avl" style="font-size:7px;letter-spacing:-0.3px">OK</div></div>
<div class="a bub" style="top:320.8px"></div>
<div class="t bt" style="left:650.5px;top:327.4px">-</div>
<svg class="a" style="left:667px;top:194.5px" width="34" height="10" viewBox="0 0 34 10"><g fill="none" stroke="#8e8e96" stroke-width="0.8"><path d="M2 7.6 L1 9 L3.4 8 H6.6 Q8.4 8 8.4 6.2 V3.4 Q8.4 1.6 6.6 1.6 H2.8 Q1 1.6 1 3.4 V6.2 Q1 7 2 7.6Z"/><circle cx="15.4" cy="5" r="3.7"/><path d="M13.8 6.2 Q15.4 7.6 17 6.2"/><path d="M25.6 5 H31"/></g><g fill="#8e8e96"><circle cx="14.2" cy="4" r="0.45"/><circle cx="16.6" cy="4" r="0.45"/></g></svg>
<svg class="a" style="left:646px;top:341px" width="34" height="10" viewBox="0 0 34 10"><g fill="none" stroke="#8e8e96" stroke-width="0.8"><path d="M2 7.6 L1 9 L3.4 8 H6.6 Q8.4 8 8.4 6.2 V3.4 Q8.4 1.6 6.6 1.6 H2.8 Q1 1.6 1 3.4 V6.2 Q1 7 2 7.6Z"/><circle cx="15.4" cy="5" r="3.7"/><path d="M13.8 6.2 Q15.4 7.6 17 6.2"/><path d="M25.6 5 H31"/></g><g fill="#8e8e96"><circle cx="14.2" cy="4" r="0.45"/><circle cx="16.6" cy="4" r="0.45"/></g></svg>
<div class="a" style="left:622px;top:353px;width:168px;height:12px;background:#f3f4f8"></div>
<svg class="a" style="left:628px;top:354px" width="9" height="10" viewBox="0 0 9 10"><circle cx="3.6" cy="2.8" r="1.9" fill="none" stroke="#777" stroke-width="0.8"/><path d="M0.8 8.8 Q0.8 5.6 3.6 5.6 Q5 5.6 5.8 6.4" fill="none" stroke="#777" stroke-width="0.8"/><circle cx="6.6" cy="7.6" r="1.9" fill="#0e72ed"/></svg>
<div class="t" style="left:637.8px;top:357px;font-size:5.97px;color:#3c3c44">Кто может видеть ваши сообщения? Запись включена</div>
<div class="t" style="left:627.8px;top:376.4px;font-size:5.76px;font-weight:700;color:#2c2c34">Кому:</div>
<div class="a" style="left:648.5px;top:372.5px;width:92.5px;height:11px;background:#0e72ed;border-radius:2.5px"></div>
<div class="t" style="left:652px;top:376.6px;font-size:5.5px;font-weight:700;color:#fff">Групповой чат конференции</div>
<svg class="a" style="left:732.5px;top:377px" width="5" height="4" viewBox="0 0 5 4"><path d="M0.8 1 L2.5 2.7 L4.2 1" fill="none" stroke="#fff" stroke-width="0.9"/></svg>
<div class="t" style="left:626px;top:389.1px;font-size:7.3px;color:#7c7c84">Сообщение Канал 2_Студентський Джем</div>
<div class="t" style="left:626px;top:398.3px;font-size:7.2px;color:#7c7c84">2025_15 жовтня</div>
<svg class="a" style="left:628px;top:410px" width="170" height="12" viewBox="0 0 170 12"><g fill="none" stroke="#85858c" stroke-width="0.8"><path d="M1.2 2.4 H8.2 M4.7 2.4 V9.6"/><circle cx="21" cy="6" r="3.8"/><path d="M19.3 7.2 Q21 8.6 22.7 7.2"/><path d="M35 2 H39 L41.4 4.4 V9.6 H35Z"/><path d="M51 4.2 V3 Q51 2 52 2 H56.4 Q57.4 2 57.4 3 V4.2 M57.4 7.6 V9 Q57.4 10 56.4 10 H52 Q51 10 51 9 V7.6"/><path d="M64.8 5.4 L66.4 7 L68 5.4"/></g><g fill="#85858c"><circle cx="19.7" cy="5" r="0.45"/><circle cx="22.3" cy="5" r="0.45"/><circle cx="57.4" cy="9.4" r="1"/></g><rect x="151" y="0.4" width="11.6" height="11" rx="2" fill="#eeeef2"/><path d="M153.6 4 L160.2 3.2 L157.8 9.4 L157 6.4Z" fill="#70707a"/></svg>
</body></html>
